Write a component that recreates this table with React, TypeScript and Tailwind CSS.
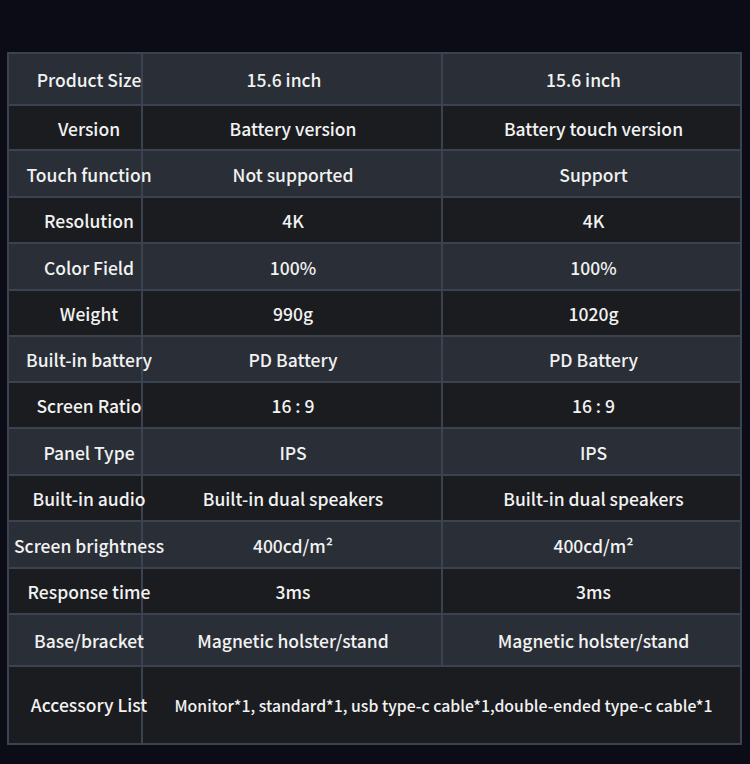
import React from "react";

const rows: { label: string; a: string; b: string; h: string }[] = [
  { label: "Product Size", a: "15.6 inch", b: "15.6 inch", h: "h-[52px]" },
  { label: "Version", a: "Battery version", b: "Battery touch version", h: "h-[45px]" },
  { label: "Touch function", a: "Not supported", b: "Support", h: "h-[47px]" },
  { label: "Resolution", a: "4K", b: "4K", h: "h-[46px]" },
  { label: "Color Field", a: "100%", b: "100%", h: "h-[47px]" },
  { label: "Weight", a: "990g", b: "1020g", h: "h-[46px]" },
  { label: "Built-in battery", a: "PD Battery", b: "PD Battery", h: "h-[46px]" },
  { label: "Screen Ratio", a: "16 : 9", b: "16 : 9", h: "h-[46px]" },
  { label: "Panel Type", a: "IPS", b: "IPS", h: "h-[47px]" },
  { label: "Built-in audio", a: "Built-in dual speakers", b: "Built-in dual speakers", h: "h-[46px]" },
  { label: "Screen brightness", a: "400cd/m²", b: "400cd/m²", h: "h-[47px]" },
  { label: "Response time", a: "3ms", b: "3ms", h: "h-[46px]" },
  { label: "Base/bracket", a: "Magnetic holster/stand", b: "Magnetic holster/stand", h: "h-[52px]" },
];

const font = { fontFamily: '"Noto Sans CJK SC", "Noto Sans", sans-serif' };

export default function App() {
  return (
    <div className="w-[750px] h-[764px] bg-[#0b0c15] pt-[52px] pl-[7px] overflow-hidden" style={font}>
      <div className="w-[735px] border-2 border-[#3b4250] text-[17.5px] font-medium text-[#f2f2f2]">
        {rows.map((r, i) => (
          <div
            key={r.label}
            className={`flex ${r.h} border-b-2 border-[#3b4250] ${i % 2 === 0 ? "bg-[#2a2f37]" : "bg-[#1b1c1f]"}`}
          >
            <div className="w-[132px] shrink-0 flex items-center justify-center pl-[28px] pt-[3px] whitespace-nowrap">
              <span className="relative z-10">{r.label}</span>
            </div>
            <div className={`w-[300px] shrink-0 border-l-2 border-[#3b4250] flex items-center justify-center pt-[3px] whitespace-nowrap ${i === 0 ? "pr-[16px]" : "pl-[2px]"}`}>
              <span>{r.a}</span>
            </div>
            <div className={`flex-1 border-l-2 border-[#3b4250] flex items-center justify-center pt-[3px] whitespace-nowrap ${i === 0 ? "pr-[16px]" : "pl-[4px]"}`}>
              <span>{r.b}</span>
            </div>
          </div>
        ))}
        <div className="flex h-[76px] bg-[#1b1c1f]">
          <div className="w-[132px] shrink-0 flex items-center justify-center pl-[28px] whitespace-nowrap">
            <span className="relative z-10">Accessory List</span>
          </div>
          <div className="flex-1 border-l-2 border-[#3b4250] flex items-center justify-center pl-[4px] pt-[2px] whitespace-nowrap text-[15.8px]">
            <span>Monitor*1, standard*1, usb type-c cable*1,double-ended type-c cable*1</span>
          </div>
        </div>
      </div>
    </div>
  );
}
